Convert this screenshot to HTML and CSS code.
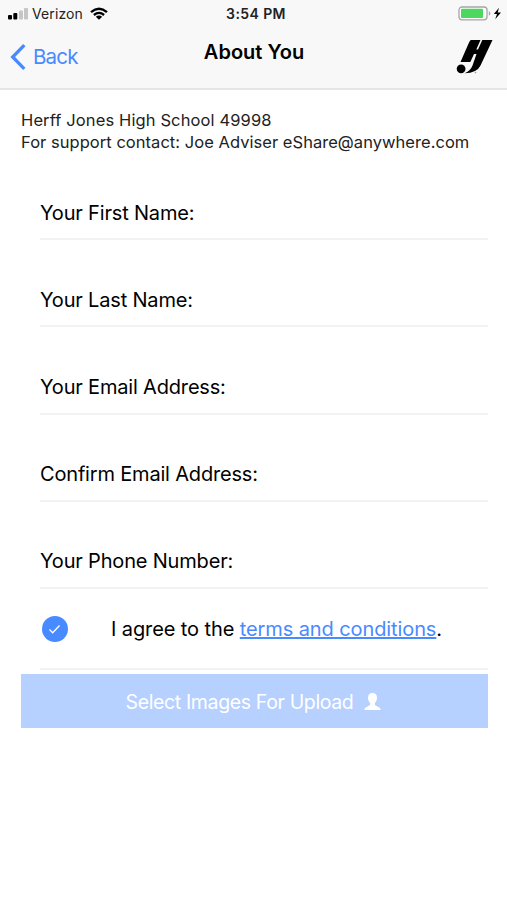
FILE: index.html
```html
<!DOCTYPE html>
<html lang="en">
<head>
<meta charset="utf-8">
<title>About You</title>
<link rel="stylesheet" href="styles.css">
</head>
<body>
<header class="header">
  <div class="status">
    <div class="carrier">
      <svg class="signal" width="21" height="14" viewBox="0 0 21 14"><rect x="0" y="8" width="4" height="4.5" rx="1"/><rect x="5.3" y="6" width="4" height="6.5" rx="1"/><g fill="#c5c5c5"><rect x="11" y="3.5" width="4" height="9" rx="1"/><rect x="16" y="1" width="4" height="11.500" rx="1"/></g></svg>
      <span class="carrier-name">Verizon</span>
      <svg class="wifi" width="18" height="14" viewBox="0 0 18 14"><g fill="none" stroke="#000" stroke-width="2.3"><path d="M1 5.100Q9-1.500 17 5.100"/><path d="M3.900 8Q9 3.800 14.100 8"/></g><path d="M5.800 9.700Q9 7.400 12.200 9.700L9 12.800z"/></svg>
    </div>
    <span class="time">3:54 PM</span>
    <svg class="battery" width="46" height="16" viewBox="0 0 46 16"><rect x="1" y="1" width="28" height="12.800" rx="3" fill="#fff" stroke="#a5a5a5" stroke-width="1.300"/><rect x="3" y="2.800" width="22" height="9.200" rx="1" fill="#4cd75e"/><path d="M30.800 5Q34 7.500 30.800 9.800z" fill="#a5a5a5"/><path d="M41 1.800L35.800 8.100H39L37.200 13.300L43 6.500H39.700z"/></svg>
  </div>
  <nav class="nav">
    <a class="back"><svg width="16" height="26" viewBox="0 0 16 26"><path d="M14.300 1.200L2.700 13L14.300 24.800" fill="none" stroke="#488aff" stroke-width="3.300"/></svg><span>Back</span></a>
    <h1 class="title">About You</h1>
    <svg class="logo" width="38" height="36" viewBox="0 0 38 36"><path d="M15 1H24.500L20.300 10.500H22L26.300 1H36.500L24.500 26.500Q21 34 8.500 34.200Q14.500 32 16.500 26.500L20.500 15H18L14.300 23H4.500L12.800 4Q14 1 15 1z"/><circle cx="5.100" cy="29.800" r="4.400"/><circle cx="19.500" cy="33.600" r=".8" fill="#999"/></svg>
  </nav>
</header>
<main class="content">
  <p class="support"><span class="school">Herff Jones High School 49998</span><br><span class="contact">For support contact: Joe Adviser eShare@anywhere.com</span></p>
  <form class="form">
    <label class="field">Your First Name:</label>
    <label class="field">Your Last Name:</label>
    <label class="field">Your Email Address:</label>
    <label class="field">Confirm Email Address:</label>
    <label class="field">Your Phone Number:</label>
    <div class="agree">
      <svg width="26" height="26" viewBox="0 0 26 26"><circle cx="13" cy="13" r="13" fill="#488aff"/><path d="M7.500 13.500L10.700 16.700L17.500 9.500" fill="none" stroke="#fff" stroke-width="1.300"/></svg>
      <span class="agree-text">I agree to the <a class="terms">terms and conditions</a>.</span>
    </div>
  </form>
  <div class="submit"><span>Select Images For Upload</span><svg width="17" height="18" viewBox="0 0 17 18" fill="#fff"><path d="M8.500 0C5.500 0 4 1.800 4 4.800C4 7.200 5 8.600 6.100 10C7.200 14 .3 12.800.3 17H16.700C16.700 12.800 9.800 14 10.900 10C12 8.600 13 7.200 13 4.800C13 1.800 11.500 0 8.500 0z"/></svg></div>
</main>
</body>
</html>
```
FILE: styles.css
```css
* { box-sizing: border-box; }
body { margin: 0; height: 900px; background: #fff; color: #000; font-family: Inter, "Liberation Sans", sans-serif; }
.header { height: 90px; background: #f8f8f8; border-bottom: 2px solid #e6e6e6; }
.status, .nav { display: grid; grid-template-columns: 1fr auto 1fr; align-items: start; }
.status { height: 28px; padding: 6px 3px 0 8px; }
.carrier { display: flex; align-items: center; height: 15px; }
.carrier-name { font-size: 14px; margin: 0 7px 0 3px; letter-spacing: 0.1px; color: #222; }
.time { font-size: 14px; line-height: 16px; font-weight: 600; letter-spacing: 0.4px; color: #222; }
.battery { justify-self: end; }
.nav { padding: 10px 13px 0 14px; }
.back { display: flex; align-items: center; gap: 7px; margin: 6px 0 0 -4px; line-height: 26px; font-size: 20.500px; letter-spacing: -0.8px; color: #488aff; }
.title { margin: 0; font-size: 20px; line-height: 28px; font-weight: 600; }
.logo { justify-self: end; margin-top: 1px; }
.content { padding: 19px 19px 0 21px; }
.support { margin: 0; font-size: 16.500px; line-height: 22px; color: #222; white-space: nowrap; }
.school { letter-spacing: 0.12px; }
.contact { letter-spacing: 0.04px; }
.form { display: flex; flex-direction: column; padding-left: 19px; }
.field { height: 87.250px; padding: 44.500px 0 0; font-size: 20px; line-height: 30px; letter-spacing: -0.18px; border-bottom: 2px solid #f2f2f2; white-space: nowrap; }
.field:first-child { height: 87px; padding-top: 45px; }
.agree { display: flex; align-items: center; gap: 43px; height: 81px; padding-left: 2px; font-size: 20px; letter-spacing: -0.1px; border-bottom: 2px solid #f2f2f2; white-space: nowrap; }
.terms { color: #488aff; text-decoration: underline; }
.submit { display: flex; align-items: center; justify-content: center; gap: 11px; height: 54px; margin-top: 4px; padding: 2px 2px 0 0; background: #b6d0ff; color: #fff; font-size: 19.500px; letter-spacing: -0.36px; white-space: nowrap; }
```
